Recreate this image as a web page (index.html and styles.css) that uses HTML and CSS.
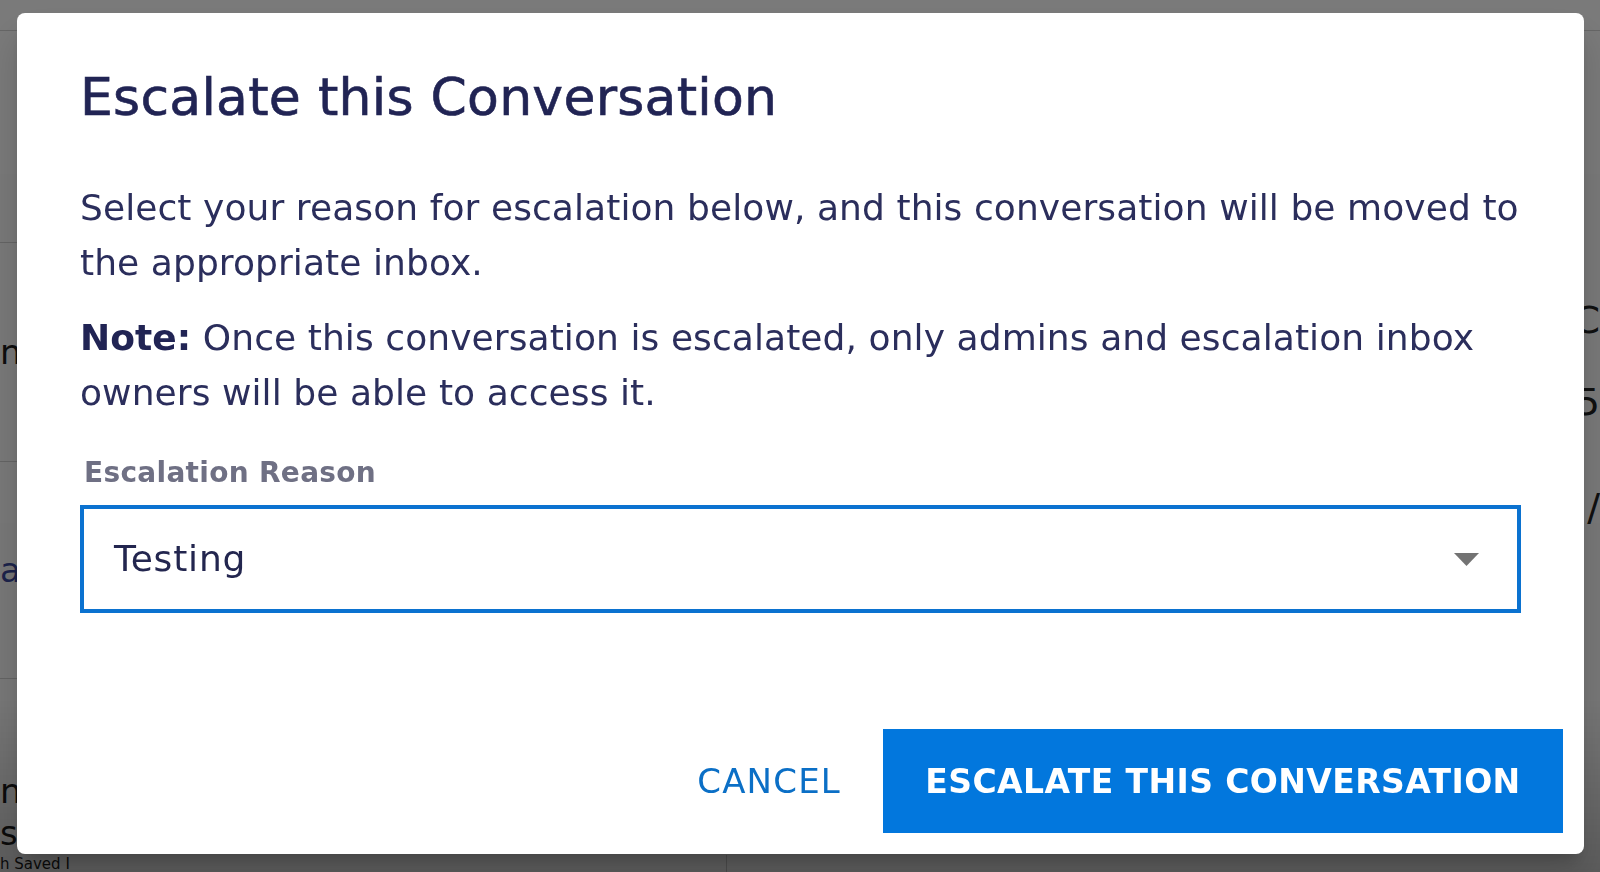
FILE: index.html
```html
<!DOCTYPE html>
<html lang="en">
<head>
<meta charset="utf-8">
<title>Escalate this Conversation</title>
<link rel="stylesheet" href="styles.css">
</head>
<body>
<div class="page">
  <div class="page-left">
    <div class="page-head"></div>
    <div class="row row-a"></div>
    <div class="row row-b"><span class="frag">n &nbsp;(</span></div>
    <div class="row row-c"><span class="frag"><span class="blue">a</span> &nbsp;(</span></div>
    <div class="row row-d"><span class="frag">n<br>st</span></div>
    <div class="row-foot"><span class="foot-text">h Saved I</span></div>
  </div>
  <div class="page-right">
    <div class="page-head"></div>
    <div class="right-notes">
      <span class="hand">C</span>
      <span class="hand">/5</span>
      <span class="hand hand-last">/</span>
    </div>
  </div>
</div>

<div class="backdrop"></div>

<div class="dialog-wrap">
  <div class="dialog" role="dialog" aria-labelledby="dlg-title">
    <div class="dialog-content">
      <h2 class="dialog-title" id="dlg-title">Escalate this Conversation</h2>
      <p class="dialog-text">Select your reason for escalation below, and this conversation will be moved to the appropriate inbox.</p>
      <p class="dialog-text note"><strong>Note:</strong> Once this conversation is escalated, only admins and escalation inbox owners will be able to access it.</p>
      <div class="field-label">Escalation Reason</div>
      <div class="select">
        <span class="select-value">Testing</span>
        <svg class="select-arrow" viewBox="0 0 25 13" width="25" height="13" aria-hidden="true"><polygon points="0,0 25,0 12.5,13" fill="#737373"/></svg>
      </div>
    </div>
    <div class="dialog-actions">
      <button class="btn btn-cancel">CANCEL</button>
      <button class="btn btn-primary">ESCALATE THIS CONVERSATION</button>
    </div>
  </div>
</div>
</body>
</html>
```
FILE: styles.css
```css
html, body {
  margin: 0;
  height: 100%;
}

body {
  font-family: "DejaVu Sans", "Liberation Sans", sans-serif;
  background: #ffffff;
  overflow: hidden;
}

/* ---------- underlying page ---------- */
.page {
  display: grid;
  grid-template-columns: 727px 1fr;
  height: 872px;
}

.page-left {
  display: flex;
  flex-direction: column;
}

.page-head {
  height: 30px;
  border-bottom: 1px solid #d4d4d4;
  flex: none;
}

.row {
  border-bottom: 1px solid #d4d4d4;
  display: flex;
  align-items: center;
  font-size: 34px;
  color: #1d1d1d;
  box-sizing: border-box;
  flex: none;
}

.row-a { height: 212px; }
.row-b { height: 219px; }
.row-c { height: 217px; }
.row-d {
  height: 176px;
  align-items: flex-start;
  padding-top: 91px;
  border-bottom: 0;
}

.frag {
  line-height: 42px;
}

.blue { color: #3c4aa0; }

.row-foot {
  flex: 1;
  border-right: 1px solid #cfcfcf;
}

.foot-text {
  display: block;
  font-size: 15px;
  line-height: 18px;
  color: #1d1d1d;
}

.page-right {
  display: flex;
  flex-direction: column;
}

.right-notes {
  display: flex;
  flex-direction: column;
  align-items: flex-end;
  padding-top: 265px;
  gap: 34px;
}

.hand {
  font-weight: 400;
  font-size: 38px;
  line-height: 48px;
  color: #222;
}

.hand-last {
  margin-top: 23px;
}

/* ---------- overlay ---------- */
.backdrop {
  position: fixed;
  inset: 0;
  background: linear-gradient(rgba(0, 0, 0, 0.52) 0%, rgba(0, 0, 0, 0.53) 80%, rgba(0, 0, 0, 0.64) 100%);
}

.dialog-wrap {
  position: fixed;
  inset: 0;
  display: flex;
  padding: 13px 16px 18px 17px;
  box-sizing: border-box;
}

.dialog {
  flex: 1;
  display: flex;
  flex-direction: column;
  background: #ffffff;
  border-radius: 8px;
  box-shadow: 0 11px 15px -7px rgba(0, 0, 0, 0.2), 0 24px 38px 3px rgba(0, 0, 0, 0.14);
}

.dialog-content {
  flex: 1;
  padding: 52px 63px 0;
}

.dialog-title {
  margin: 0;
  font-size: 52px;
  line-height: 64px;
  font-weight: 400;
  letter-spacing: 0.25px;
  color: #212454;
  -webkit-text-stroke: 0.6px #212454;
}

.dialog-text {
  margin: 51px 0 0;
  font-size: 36px;
  line-height: 55px;
  letter-spacing: 0.08px;
  color: #2b2e5c;
}

.dialog-text.note {
  margin-top: 20px;
}

.dialog-text strong {
  font-weight: 700;
  color: #212454;
}

.field-label {
  margin-top: 36px;
  padding-left: 4px;
  font-size: 28px;
  line-height: 34px;
  font-weight: 700;
  letter-spacing: 0.3px;
  color: #6f7084;
}

.select {
  margin-top: 15px;
  height: 108px;
  box-sizing: border-box;
  border: 4px solid #0b72d0;
  display: flex;
  align-items: center;
  padding: 0 38px 0 30px;
}

.select-value {
  flex: 1;
  font-size: 36px;
  line-height: 42px;
  letter-spacing: 0.8px;
  color: #23264f;
}

.select-arrow {
  display: block;
  flex: none;
}

.dialog-actions {
  display: flex;
  justify-content: flex-end;
  align-items: center;
  padding: 0 21px 21px;
}

.btn {
  font-family: "DejaVu Sans", "Liberation Sans", sans-serif;
  border: 0;
  cursor: pointer;
}

.btn-cancel {
  background: transparent;
  color: #0b6fc6;
  font-size: 34px;
  letter-spacing: 1.2px;
  padding: 0;
  margin-right: 42px;
  line-height: 40px;
}

.btn-primary {
  width: 680px;
  height: 104px;
  background: #0277dd;
  color: #ffffff;
  font-size: 33px;
  font-weight: 700;
  letter-spacing: 0.4px;
  padding: 0;
  display: flex;
  align-items: center;
  justify-content: center;
}
```
